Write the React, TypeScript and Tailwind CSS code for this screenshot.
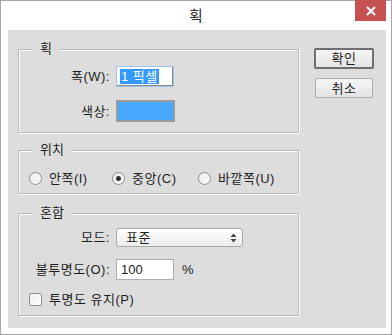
import React from "react";

const font = "font-['Liberation_Sans','Noto_Sans_CJK_KR',sans-serif]";

function Group({ label, className, children }: { label: string; className: string; children: React.ReactNode }) {
    return (
        <div
            className={`relative border border-[#b9b9b9] shadow-[inset_1px_1px_0_#ffffff,1px_1px_0_#ffffff] ${className}`}
        >
            <span className="absolute left-[14px] top-[-9px] bg-[#dddddd] px-[7px] text-[13px] leading-[15px] text-[#1e1e1e]">
                {label}
            </span>
            {children}
        </div>
    );
}

function Radio({ checked, label, width }: { checked?: boolean; label: string; width: string }) {
    return (
        <div className={`flex items-center h-[15px] ${width}`}>
            <span className="flex h-[13px] w-[13px] items-center justify-center rounded-full border border-[#8f8f8f] bg-gradient-to-br from-[#ececec] to-[#ffffff]">
                {checked && <span className="h-[5px] w-[5px] rounded-full bg-[#333333]" />}
            </span>
            <span className="ml-[7px] text-[13px] leading-[15px] tracking-[0.5px] text-[#1e1e1e] whitespace-nowrap">{label}</span>
        </div>
    );
}

export default function App() {
    return (
        <div className={`flex h-[335px] w-[392px] flex-col border border-[#a6a6a6] bg-white ${font}`}>
            {/* title bar */}
            <div className="grid h-[29px] grid-cols-[1fr_auto_1fr]">
                <div />
                <span className="self-center text-[15px] leading-[18px] text-[#2b2b2b]">획</span>
                <div className="flex justify-end pr-[5px]">
                    <button className="-mt-px flex h-[21px] w-[31px] items-center justify-center bg-[#c75050]">
                        <svg width="10" height="10" viewBox="0 0 10 10">
                            <path d="M1 1 L9 9 M9 1 L1 9" stroke="#ffffff" strokeWidth="2" />
                        </svg>
                    </button>
                </div>
            </div>

            {/* client */}
            <div className="ml-[7px] mr-[5px] flex h-[298px] bg-[#dddddd] text-[#1e1e1e]">
                <div className="flex w-[290px] flex-col pl-[10px] pt-[19px]">
                    <Group label="획" className="h-[84px] w-[281px] pt-[16px]">
                        <div className="flex items-center">
                            <span className="w-[91px] text-right text-[13px] leading-[15px] tracking-[0.5px]">폭(W):</span>
                            <div className="ml-[6px] flex h-[21px] w-[58px] items-center border border-[#9fc4ec] bg-white pl-[3px] shadow-[inset_-1px_-1px_0_#8a8a8a]">
                                <span className="bg-[#3399ff] px-px text-[13px] leading-[15px] tracking-[0.5px] text-white">1 픽셀</span>
                            </div>
                        </div>
                        <div className="mt-[13px] flex items-center">
                            <span className="w-[91px] text-right text-[13px] leading-[15px] tracking-[0.5px]">색상:</span>
                            <div className="ml-[6px] h-[22px] w-[59px] border-2 border-[#9b9b9b] bg-[#48a9ff]" />
                        </div>
                    </Group>

                    <Group label="위치" className="mt-[17px] h-[44px] w-[281px] pl-[10px] pt-[20px]">
                        <div className="flex">
                            <Radio label="안쪽(I)" width="w-[83px]" />
                            <Radio checked label="중앙(C)" width="w-[86px]" />
                            <Radio label="바깥쪽(U)" width="w-[90px]" />
                        </div>
                    </Group>

                    <Group label="혼합" className="mt-[19px] h-[103px] w-[281px] pt-[14px]">
                        <div className="flex items-center">
                            <span className="w-[91px] text-right text-[13px] leading-[15px] tracking-[0.5px]">모드:</span>
                            <div className="ml-[6px] flex h-[19px] w-[127px] items-center justify-between rounded-[3px] border border-[#a9a9a9] bg-gradient-to-b from-[#ffffff] to-[#ececec] pl-[9px] pr-[5px]">
                                <span className="text-[13px] leading-[15px] tracking-[0.5px]">표준</span>
                                <svg width="7" height="10" viewBox="0 0 7 10">
                                    <path d="M3.5 0.5 L6.5 4 L0.5 4 Z M0.5 6 L6.5 6 L3.5 9.5 Z" fill="#444444" />
                                </svg>
                            </div>
                        </div>
                        <div className="mt-[12px] flex items-center">
                            <span className="w-[91px] whitespace-nowrap text-right text-[13px] leading-[15px] tracking-[0.5px]">불투명도(O):</span>
                            <div className="ml-[6px] flex h-[21px] w-[58px] items-center border border-[#abadb3] bg-white pl-[4px]">
                                <span className="text-[13px] leading-[15px]">100</span>
                            </div>
                            <span className="ml-[8px] text-[13px] leading-[15px]">%</span>
                        </div>
                        <div className="ml-[10px] mt-[12px] flex h-[15px] items-center">
                            <span className="h-[13px] w-[13px] rounded-[2px] border border-[#8f8f8f] bg-gradient-to-br from-[#ececec] to-[#ffffff]" />
                            <span className="ml-[7px] text-[13px] leading-[15px] tracking-[0.5px]">투명도 유지(P)</span>
                        </div>
                    </Group>
                </div>

                <div className="ml-[16px] flex flex-col items-start pt-[18px]">
                    <button className="flex h-[21px] w-[60px] items-center justify-center rounded-[2px] border-2 border-[#6f6f6f] bg-gradient-to-b from-[#f6f6f6] to-[#e3e3e3] text-[13px] leading-[15px] tracking-[0.5px]">
                        확인
                    </button>
                    <button className="ml-px mt-[9px] flex h-[20px] w-[58px] items-center justify-center rounded-[2px] border border-[#acacac] bg-gradient-to-b from-[#f6f6f6] to-[#e3e3e3] text-[13px] leading-[15px] tracking-[0.5px]">
                        취소
                    </button>
                </div>
            </div>
        </div>
    );
}
